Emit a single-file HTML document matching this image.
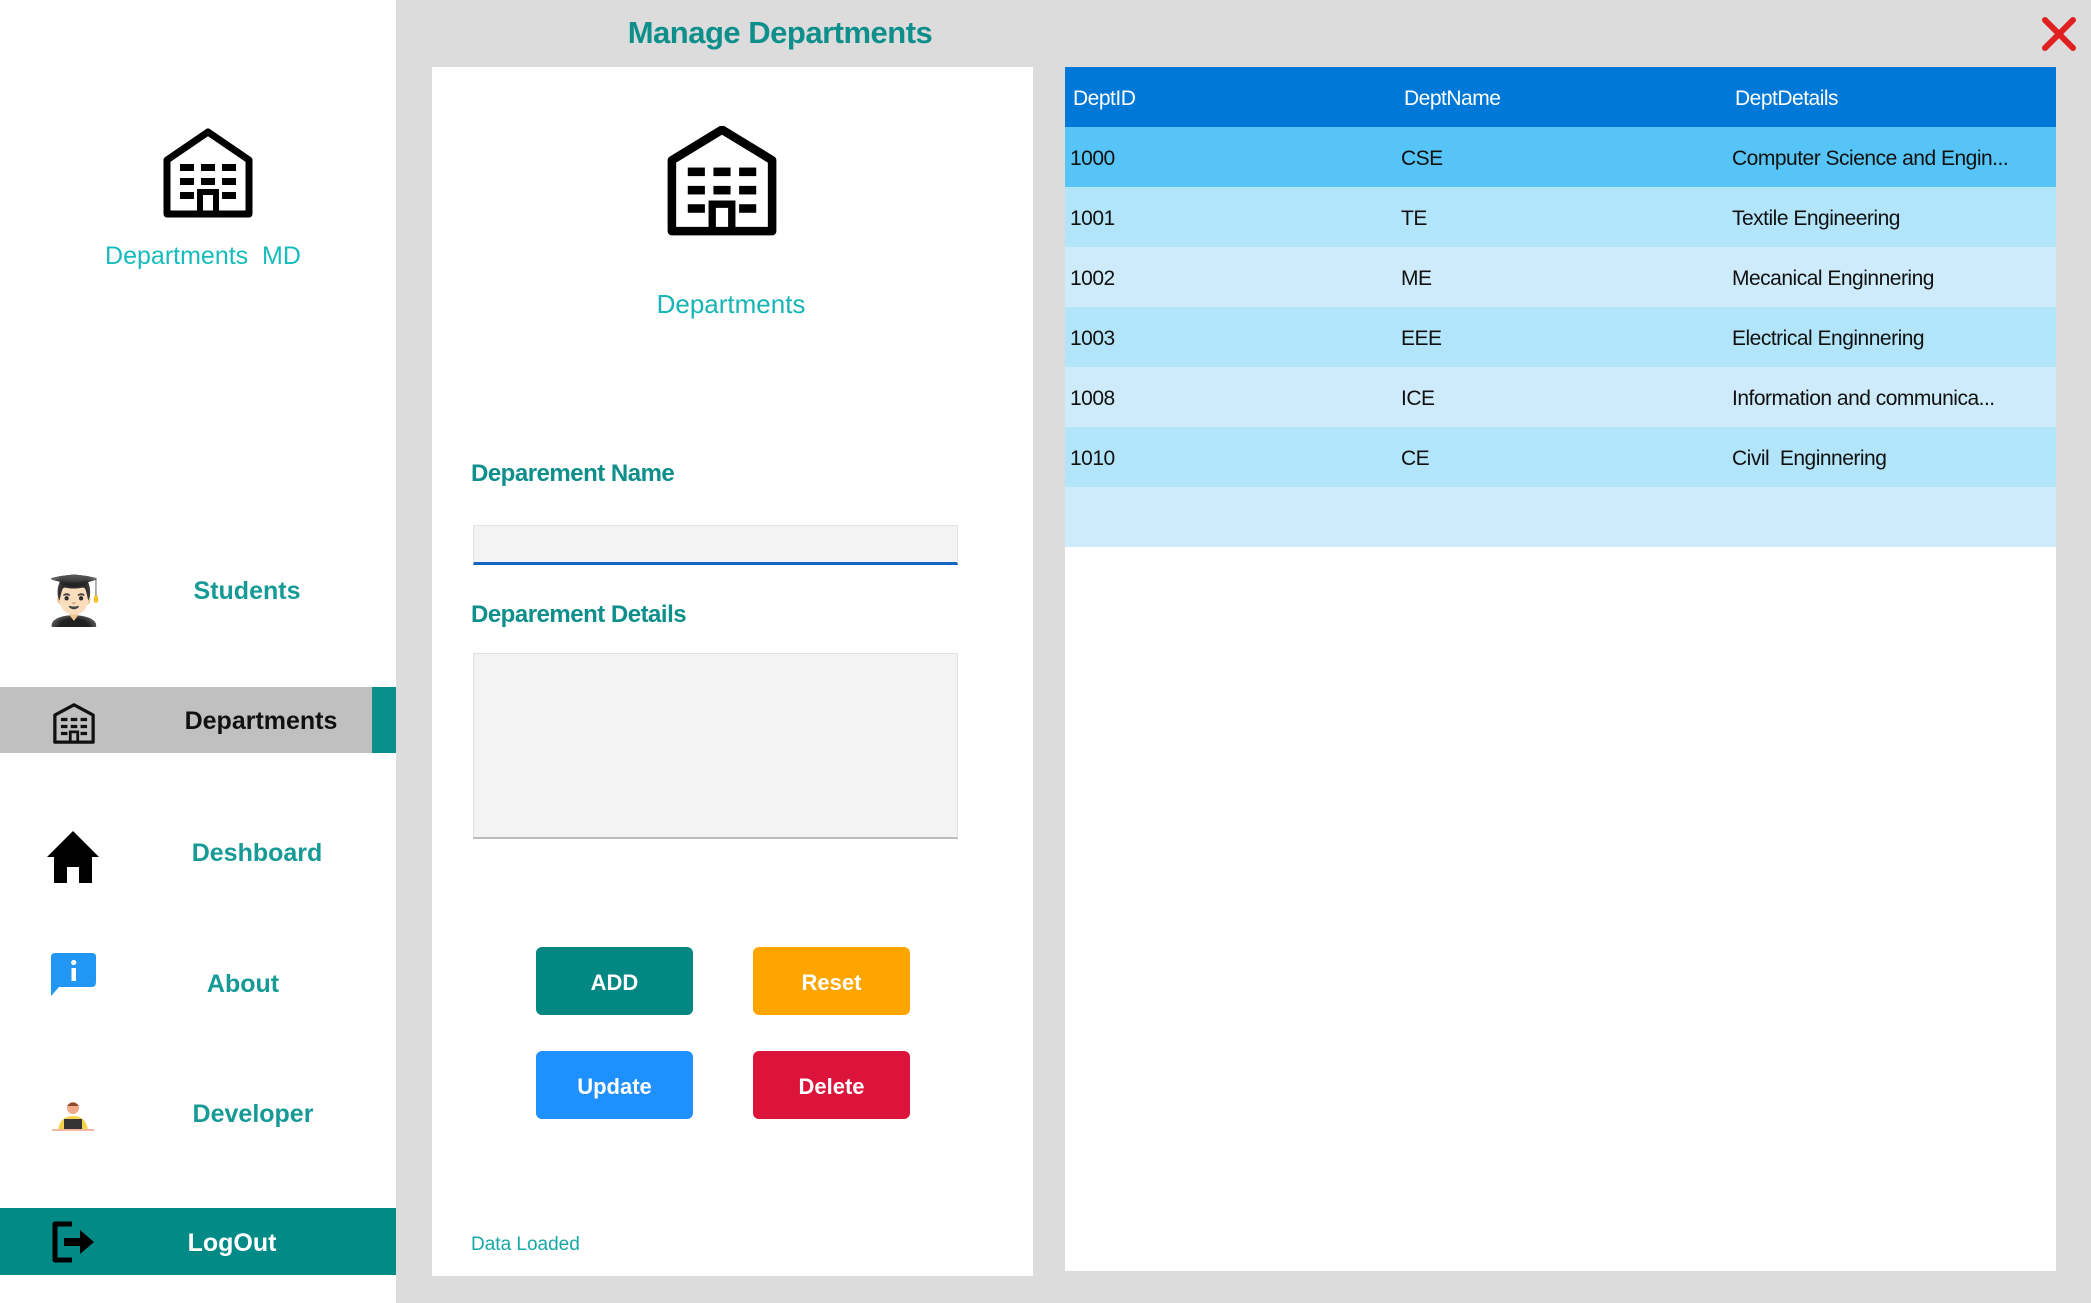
<!DOCTYPE html>
<html><head><meta charset="utf-8">
<style>
*{margin:0;padding:0;box-sizing:border-box}
body{width:2091px;height:1303px;background:#dcdcdc;font-family:"Liberation Sans",sans-serif;position:relative;overflow:hidden}
.abs{position:absolute}
.side{left:0;top:0;width:396px;height:1303px;background:#fff}
.nav{position:absolute;left:0;width:396px;font-weight:bold;font-size:25px;color:#169a96;text-align:center}
.t{position:absolute;transform:translateX(-50%);white-space:nowrap}
.panel{left:432px;top:67px;width:601px;height:1209px;background:#fff}
.lbl{position:absolute;color:#0e8f8c;font-weight:bold;font-size:24px;letter-spacing:-0.5px}
.btn{position:absolute;width:157px;height:68px;border-radius:6px;color:#fff;font-weight:bold;font-size:22px;display:flex;align-items:center;justify-content:center;padding-top:3px}
.grid{left:1065px;top:67px;width:991px;height:1204px;background:#fff}
.row{position:absolute;left:0;width:991px;height:60px;font-size:21px;color:#111}
.row span{position:absolute;top:20px;letter-spacing:-0.5px}
</style></head><body>
<div class="abs side"></div>
<svg class="abs" style="left:163px;top:128px" width="90" height="90" viewBox="0 0 90 90">
<path d="M4 32 L45 4 L86 32 V86 H4 Z" fill="none" stroke="#000" stroke-width="7" stroke-linejoin="round"/>
<g fill="#000"><rect x="17" y="36" width="14" height="7"/><rect x="38" y="36" width="14" height="7"/><rect x="59" y="36" width="14" height="7"/>
<rect x="17" y="50" width="14" height="7"/><rect x="38" y="50" width="14" height="7"/><rect x="59" y="50" width="14" height="7"/>
<rect x="17" y="64" width="14" height="7"/><rect x="59" y="64" width="14" height="7"/></g>
<path d="M37 86 V64 H53 V86" fill="none" stroke="#000" stroke-width="6"/>
</svg>
<div class="abs" style="left:203px;top:242px;transform:translateX(-50%);color:#16bcbc;font-size:25px;white-space:nowrap">Departments&nbsp; MD</div>

<div class="abs" style="left:44px;top:572px;font-size:48px;line-height:60px">👨🏻‍🎓</div>
<div class="nav" style="top:577px"><span class="t" style="left:247px">Students</span></div>

<div class="abs" style="left:0;top:687px;width:372px;height:66px;background:#c0c0c0"></div>
<div class="abs" style="left:372px;top:687px;width:24px;height:66px;background:#0a8f8c"></div>
<svg class="abs" style="left:53px;top:702px" width="42" height="42" viewBox="0 0 90 90">
<path d="M4 28 L45 6 L86 28 V86 H4 Z" fill="none" stroke="#111" stroke-width="7" stroke-linejoin="round"/>
<g fill="#111"><rect x="17" y="34" width="14" height="7"/><rect x="38" y="34" width="14" height="7"/><rect x="59" y="34" width="14" height="7"/>
<rect x="17" y="49" width="14" height="7"/><rect x="38" y="49" width="14" height="7"/><rect x="59" y="49" width="14" height="7"/>
<rect x="17" y="64" width="14" height="7"/><rect x="59" y="64" width="14" height="7"/></g>
<path d="M37 86 V64 H53 V86" fill="none" stroke="#111" stroke-width="6"/>
</svg>
<div class="nav" style="top:707px;color:#111"><span class="t" style="left:261px">Departments</span></div>

<svg class="abs" style="left:45px;top:829px" width="56" height="56" viewBox="0 0 56 56">
<path d="M28 2 L54 28 H47 V54 H34 V38 H22 V54 H9 V28 H2 Z" fill="#000"/>
</svg>
<div class="nav" style="top:839px"><span class="t" style="left:257px">Deshboard</span></div>

<svg class="abs" style="left:50px;top:952px" width="47" height="45" viewBox="0 0 47 45">
<path d="M5 1 H42 Q46 1 46 5 V30 Q46 35 42 35 H9 L1 44 V5 Q1 1 5 1 Z" fill="#2196f3"/>
<rect x="21.5" y="16" width="4.5" height="13" fill="#fff"/><circle cx="23.7" cy="10.5" r="2.6" fill="#fff"/>
</svg>
<div class="nav" style="top:970px"><span class="t" style="left:243px">About</span></div>

<svg class="abs" style="left:50px;top:1100px" width="46" height="32" viewBox="0 0 46 32">
<circle cx="23" cy="8" r="6" fill="#f0a98a"/><path d="M17 6 Q23 -1 29 6 Z" fill="#8a4a2a"/>
<path d="M8 30 Q10 16 23 16 Q36 16 38 30 Z" fill="#f4d34a"/>
<rect x="14" y="19" width="18" height="11" fill="#333"/><rect x="2" y="29" width="42" height="2" fill="#f1b7a0"/>
</svg>
<div class="nav" style="top:1100px"><span class="t" style="left:253px">Developer</span></div>

<div class="abs" style="left:0;top:1208px;width:396px;height:67px;background:#028a87"></div>
<svg class="abs" style="left:50px;top:1221px" width="46" height="42" viewBox="0 0 46 42">
<path d="M22 3 H5 V39 H22" fill="none" stroke="#000" stroke-width="5" stroke-linejoin="round"/>
<path d="M14 17 H30 V9 L44 21 L30 33 V25 H14 Z" fill="#000"/>
</svg>
<div class="nav" style="top:1229px;color:#fff"><span class="t" style="left:232px">LogOut</span></div>

<div class="abs" style="left:780px;top:15px;transform:translateX(-50%);color:#0e8f8c;font-weight:bold;font-size:31px;white-space:nowrap;letter-spacing:-0.5px">Manage Departments</div>
<svg class="abs" style="left:2041px;top:16px" width="36" height="36" viewBox="0 0 36 36">
<path d="M4 4 L32 32 M32 4 L4 32" stroke="#e02020" stroke-width="6" stroke-linecap="round"/>
</svg>

<div class="abs panel"></div>
<svg class="abs" style="left:667px;top:126px" width="110" height="110" viewBox="0 0 90 90">
<path d="M4 28 L45 3 L86 28 V86 H4 Z" fill="none" stroke="#000" stroke-width="7" stroke-linejoin="round"/>
<g fill="#000"><rect x="17" y="34" width="14" height="7"/><rect x="38" y="34" width="14" height="7"/><rect x="59" y="34" width="14" height="7"/>
<rect x="17" y="49" width="14" height="7"/><rect x="38" y="49" width="14" height="7"/><rect x="59" y="49" width="14" height="7"/>
<rect x="17" y="64" width="14" height="7"/><rect x="59" y="64" width="14" height="7"/></g>
<path d="M37 86 V64 H53 V86" fill="none" stroke="#000" stroke-width="6"/>
</svg>
<div class="abs" style="left:731px;top:289px;transform:translateX(-50%);color:#16b4b4;font-size:26px;white-space:nowrap">Departments</div>
<div class="lbl" style="left:471px;top:460px">Deparement Name</div>
<div class="abs" style="left:473px;top:525px;width:485px;height:40px;background:#f3f3f3;border:1px solid #e4e4e4;border-bottom:3px solid #1565c0"></div>
<div class="lbl" style="left:471px;top:601px">Deparement Details</div>
<div class="abs" style="left:473px;top:653px;width:485px;height:186px;background:#f3f3f3;border:1px solid #e0e0e0;border-bottom:2px solid #bbb"></div>
<div class="btn" style="left:536px;top:947px;background:#038783">ADD</div>
<div class="btn" style="left:753px;top:947px;background:#ffa500">Reset</div>
<div class="btn" style="left:536px;top:1051px;background:#1e90ff">Update</div>
<div class="btn" style="left:753px;top:1051px;background:#dc143c">Delete</div>
<div class="abs" style="left:471px;top:1234px;color:#16a8a8;font-size:19px">Data Loaded</div>

<div class="abs grid">
<div class="row" style="top:0;background:#0078d7;color:#fff"><span style="left:8px">DeptID</span><span style="left:339px">DeptName</span><span style="left:670px">DeptDetails</span></div>
<div class="row" style="top:60px;background:#56c4f6"><span style="left:5px">1000</span><span style="left:336px">CSE</span><span style="left:667px">Computer Science and Engin...</span></div>
<div class="row" style="top:120px;background:#b3e5fa"><span style="left:5px">1001</span><span style="left:336px">TE</span><span style="left:667px">Textile Engineering</span></div>
<div class="row" style="top:180px;background:#cdebfb"><span style="left:5px">1002</span><span style="left:336px">ME</span><span style="left:667px">Mecanical Enginnering</span></div>
<div class="row" style="top:240px;background:#b3e5fa"><span style="left:5px">1003</span><span style="left:336px">EEE</span><span style="left:667px">Electrical Enginnering</span></div>
<div class="row" style="top:300px;background:#cdebfb"><span style="left:5px">1008</span><span style="left:336px">ICE</span><span style="left:667px">Information and communica...</span></div>
<div class="row" style="top:360px;background:#b3e5fa"><span style="left:5px">1010</span><span style="left:336px">CE</span><span style="left:667px">Civil&nbsp; Enginnering</span></div>
<div class="row" style="top:420px;background:#cdebfb"></div>
</div>
</body></html>
